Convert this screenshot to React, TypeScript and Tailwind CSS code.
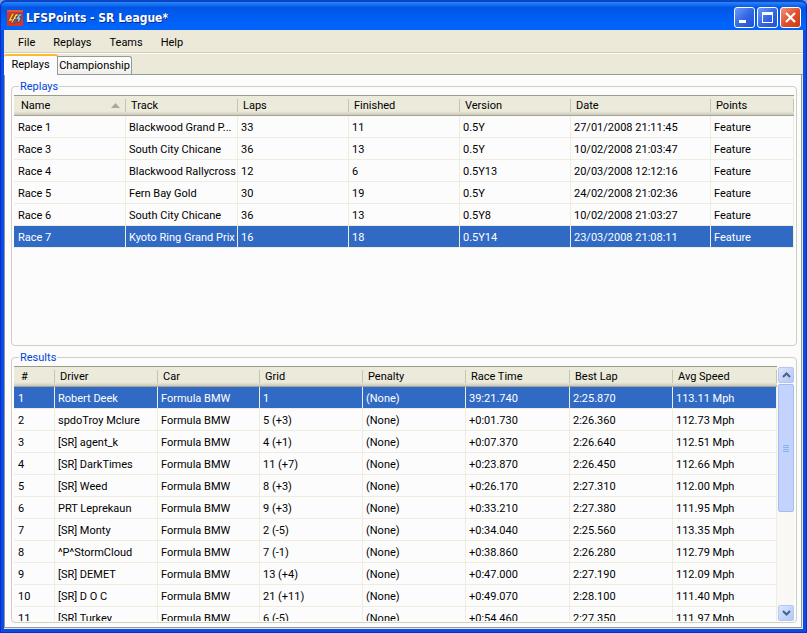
import React from 'react';

interface Column {
  label: string;
  width: string;
  sorted?: boolean;
}

interface ListViewProps {
  label: string;
  columns: Column[];
  rows: string[][];
  selected: number;
}

interface GroupBoxProps {
  title: string;
  className: string;
  children: React.ReactNode;
}

const replayColumns: Column[] = [
  { label: 'Name', width: 'w-[112px]', sorted: true },
  { label: 'Track', width: 'w-[112px]' },
  { label: 'Laps', width: 'w-[111px]' },
  { label: 'Finished', width: 'w-[111px]' },
  { label: 'Version', width: 'w-[111px]' },
  { label: 'Date', width: 'w-[140px]' },
  { label: 'Points', width: 'w-auto' },
];

const replays = [
  ['Race 1', 'Blackwood Grand P...', '33', '11', '0.5Y', '27/01/2008 21:11:45', 'Feature'],
  ['Race 3', 'South City Chicane', '36', '13', '0.5Y', '10/02/2008 21:03:47', 'Feature'],
  ['Race 4', 'Blackwood Rallycross', '12', '6', '0.5Y13', '20/03/2008 12:12:16', 'Feature'],
  ['Race 5', 'Fern Bay Gold', '30', '19', '0.5Y', '24/02/2008 21:02:36', 'Feature'],
  ['Race 6', 'South City Chicane', '36', '13', '0.5Y8', '10/02/2008 21:03:27', 'Feature'],
  ['Race 7', 'Kyoto Ring Grand Prix', '16', '18', '0.5Y14', '23/03/2008 21:08:11', 'Feature'],
];

const resultColumns: Column[] = [
  { label: '#', width: 'w-[41px]' },
  { label: 'Driver', width: 'w-[103px]' },
  { label: 'Car', width: 'w-[102px]' },
  { label: 'Grid', width: 'w-[103px]' },
  { label: 'Penalty', width: 'w-[103px]' },
  { label: 'Race Time', width: 'w-[104px]' },
  { label: 'Best Lap', width: 'w-[103px]' },
  { label: 'Avg Speed', width: 'w-auto' },
];

const results = [
  ['1', 'Robert Deek', 'Formula BMW', '1', '(None)', '39:21.740', '2:25.870', '113.11 Mph'],
  ['2', 'spdoTroy Mclure', 'Formula BMW', '5 (+3)', '(None)', '+0:01.730', '2:26.360', '112.73 Mph'],
  ['3', '[SR] agent_k', 'Formula BMW', '4 (+1)', '(None)', '+0:07.370', '2:26.640', '112.51 Mph'],
  ['4', '[SR] DarkTimes', 'Formula BMW', '11 (+7)', '(None)', '+0:23.870', '2:26.450', '112.66 Mph'],
  ['5', '[SR] Weed', 'Formula BMW', '8 (+3)', '(None)', '+0:26.170', '2:27.310', '112.00 Mph'],
  ['6', 'PRT Leprekaun', 'Formula BMW', '9 (+3)', '(None)', '+0:33.210', '2:27.380', '111.95 Mph'],
  ['7', '[SR] Monty', 'Formula BMW', '2 (-5)', '(None)', '+0:34.040', '2:25.560', '113.35 Mph'],
  ['8', '^P^StormCloud', 'Formula BMW', '7 (-1)', '(None)', '+0:38.860', '2:26.280', '112.79 Mph'],
  ['9', '[SR] DEMET', 'Formula BMW', '13 (+4)', '(None)', '+0:47.000', '2:27.190', '112.09 Mph'],
  ['10', '[SR] D O C', 'Formula BMW', '21 (+11)', '(None)', '+0:49.070', '2:28.100', '111.40 Mph'],
  ['11', '[SR] Turkey', 'Formula BMW', '6 (-5)', '(None)', '+0:54.460', '2:27.350', '111.97 Mph'],
];

function AppLogo() {
  return (
    <svg viewBox="0 0 16 16" className="size-4 shrink-0" aria-hidden="true">
      <rect width="16" height="16" fill="#d8342a" />
      <path d="M0 0h16v2H0z" fill="#e8503c" />
      <path d="M5 3h2.500L4.500 9H7l-1 2.200H1z" fill="#f7c93c" stroke="#6a2a14" strokeWidth=".6" />
      <path d="M8.500 4H12l-1.200 2H9.500l-.8 1.500h1.500L9 9H7.800L5.500 13H3.800z" fill="#fdeb8c" stroke="#6a2a14" strokeWidth=".6" />
      <path d="M12 4h3.500l-1 2h-1.300l-.5 1.200h1.500L12.500 12H10l1-2.500H9.500L8.200 13H6.800L10 7z" fill="#8fc4e8" stroke="#28324a" strokeWidth=".6" />
    </svg>
  );
}

function TitleBar() {
  const button =
    'flex size-[21px] items-center justify-center rounded-[3px] border border-white';
  const blue = 'bg-linear-to-br from-[#6f9bf5] via-[#3568e4] to-[#2050cf]';
  return (
    <header className="flex h-[30px] shrink-0 items-center rounded-t-[6px] border-t-2 border-[#0a46c4] bg-linear-to-b from-[#2a86fa] from-0% via-[#0055e5] via-20% to-[#0063fb] to-80% pt-[3px] pr-[5px] pl-[6px]">
      <AppLogo />
      <h1 className="ml-[3px] flex-1 truncate font-['DejaVu_Sans_Condensed','DejaVu_Sans',sans-serif] text-[12px] font-bold text-white [text-shadow:1px_1px_0_#0a2a86]">
        LFSPoints - SR League*
      </h1>
      <div className="flex gap-[2px]">
        <button type="button" aria-label="Minimize" className={`${button} ${blue}`}>
          <svg viewBox="0 0 19 19" className="size-[19px]">
            <path d="M4 12h7v3H4z" fill="#fff" />
          </svg>
        </button>
        <button type="button" aria-label="Maximize" className={`${button} ${blue}`}>
          <svg viewBox="0 0 19 19" className="size-[19px]">
            <path d="M4 4h11v11H4zM5 7v7h9V7z" fill="#fff" fillRule="evenodd" />
          </svg>
        </button>
        <button
          type="button"
          aria-label="Close"
          className={`${button} bg-linear-to-br from-[#f0957a] via-[#e0502c] to-[#c83a12]`}
        >
          <svg viewBox="0 0 19 19" className="size-[19px]">
            <path d="M5 5l9 9M14 5l-9 9" stroke="#fff" strokeWidth="2.2" />
          </svg>
        </button>
      </div>
    </header>
  );
}

function MenuBar() {
  return (
    <nav className="flex h-[23px] shrink-0 items-center gap-[18px] border-b border-[#d0cdbb] bg-[#ece9d8] pt-[3px] pl-[14px]">
      {['File', 'Replays', 'Teams', 'Help'].map((item) => (
        <button key={item} type="button">
          {item}
        </button>
      ))}
    </nav>
  );
}

function Tabs() {
  return (
    <div role="tablist" className="flex h-[22px] shrink-0 items-end border-t border-white bg-[#ece9d8]">
      <button
        type="button"
        role="tab"
        aria-selected="true"
        className="h-[21px] w-[54px] rounded-t-[3px] border-t-2 border-r border-t-[#ffb931] border-r-[#919b9c] bg-[#fcfcfc] pb-[2px]"
      >
        Replays
      </button>
      <div className="flex flex-1 items-end border-b border-[#919b9c]">
        <button
          type="button"
          role="tab"
          aria-selected="false"
          className="h-[18px] w-[74px] rounded-tr-[3px] border-t border-r border-[#919b9c] bg-linear-to-b from-white to-[#f0f0ea]"
        >
          Championship
        </button>
      </div>
    </div>
  );
}

function ListView({ label, columns, rows, selected }: ListViewProps) {
  return (
    <div className="min-w-0 flex-1 overflow-hidden">
      <table aria-label={label} className="w-full table-fixed border-separate border-spacing-0 text-left">
        <thead>
          <tr>
            {columns.map((col, i) => (
              <th
                key={col.label}
                className={`${col.width} h-[21px] border-t border-b border-t-[#9a9c8c] border-b-[#a5a593] bg-linear-to-b from-[#ebeadb] from-80% to-[#cdc9b9] p-0 font-normal`}
              >
                <div
                  className={`flex h-[13px] items-center justify-between border-r border-[#c7c5b2] pr-[5px] shadow-[1px_0_0_#fff] ${i === 0 ? 'pl-[7px]' : 'pl-[5px]'}`}
                >
                  {col.label}
                  {col.sorted && (
                    <svg viewBox="0 0 9 5" className="h-[5px] w-[9px]" aria-hidden="true">
                      <path d="M4.500 0L9 5H0z" fill="#aca899" />
                    </svg>
                  )}
                </div>
              </th>
            ))}
          </tr>
        </thead>
        <tbody>
          {rows.map((row, i) => (
            <tr key={row[0]} className={i === selected ? 'bg-[#316ac5] text-white' : ''}>
              {row.map((cell, j) => (
                <td
                  key={j}
                  className={`h-[22px] overflow-hidden border-r border-b border-[#efedde] pt-[2px] pr-0 pb-0 whitespace-nowrap ${j === 0 ? 'pl-[4px]' : 'pl-[3px]'}`}
                >
                  {cell}
                </td>
              ))}
            </tr>
          ))}
        </tbody>
      </table>
    </div>
  );
}

function ScrollBar() {
  const arrow =
    'flex h-4 w-4 shrink-0 items-center justify-center rounded-[2px] border border-[#b4c8f6] bg-linear-to-br from-[#dbe5fe] to-[#b2c8f8]';
  return (
    <div className="flex w-[17px] shrink-0 flex-col items-end bg-[#f9f8f5] pt-px">
      <button type="button" aria-label="Scroll up" className={arrow}>
        <svg viewBox="0 0 9 6" className="h-[6px] w-[9px]">
          <path d="M1 5l3.500-3.500L8 5" fill="none" stroke="#4d6185" strokeWidth="2" />
        </svg>
      </button>
      <div className="flex min-h-0 w-full flex-1 flex-col items-end pt-px">
        <div className="flex h-[58%] w-4 items-center justify-center rounded-[2px] border border-[#a5bcee] bg-[#c3d3fd]">
          <div className="flex flex-col gap-px">
            <span className="h-px w-[6px] bg-[#8cb0f8]" />
            <span className="h-px w-[6px] bg-[#8cb0f8]" />
            <span className="h-px w-[6px] bg-[#8cb0f8]" />
            <span className="h-px w-[6px] bg-[#8cb0f8]" />
          </div>
        </div>
      </div>
      <button type="button" aria-label="Scroll down" className={arrow}>
        <svg viewBox="0 0 9 6" className="h-[6px] w-[9px]">
          <path d="M1 1l3.500 3.500L8 1" fill="none" stroke="#4d6185" strokeWidth="2" />
        </svg>
      </button>
    </div>
  );
}

function GroupBox({ title, className, children }: GroupBoxProps) {
  return (
    <fieldset
      className={`flex min-h-0 min-w-0 flex-col rounded-[4px] border border-[#d0d0bf] px-[2px] pt-[3px] pb-px ${className}`}
    >
      <legend className="ml-[5px] h-[12px] px-[1px] leading-[14px] text-[#0046d5]">{title}</legend>
      <div className="flex min-h-0 flex-1">{children}</div>
    </fieldset>
  );
}

export default function App() {
  return (
    <div className="h-screen bg-[#7f9fd8]">
      <div className="flex h-full flex-col overflow-hidden rounded-t-[6px] border-x border-b border-[#0a2fc8] bg-[#0d50e8] font-[Roboto,'Liberation_Sans',sans-serif] text-[11px] leading-[14px] text-black">
        <TitleBar />
        <div className="flex min-h-0 flex-1 flex-col border-x-3 border-b-3 border-[#0b4ce6]">
          <MenuBar />
          <Tabs />
          <div className="flex min-h-0 flex-1 flex-col bg-[#ece9d8] pr-px pb-px">
            <main className="flex min-h-0 flex-1 flex-col gap-[5px] border-x border-b border-[#919b9c] bg-[#fcfcfc] pt-[5px] pr-[4px] pb-[4px] pl-[6px]">
              <GroupBox title="Replays" className="flex-[266]">
                <ListView label="Replays" columns={replayColumns} rows={replays} selected={5} />
              </GroupBox>
              <GroupBox title="Results" className="flex-[272]">
                <ListView label="Results" columns={resultColumns} rows={results} selected={0} />
                <ScrollBar />
              </GroupBox>
            </main>
          </div>
        </div>
      </div>
    </div>
  );
}
